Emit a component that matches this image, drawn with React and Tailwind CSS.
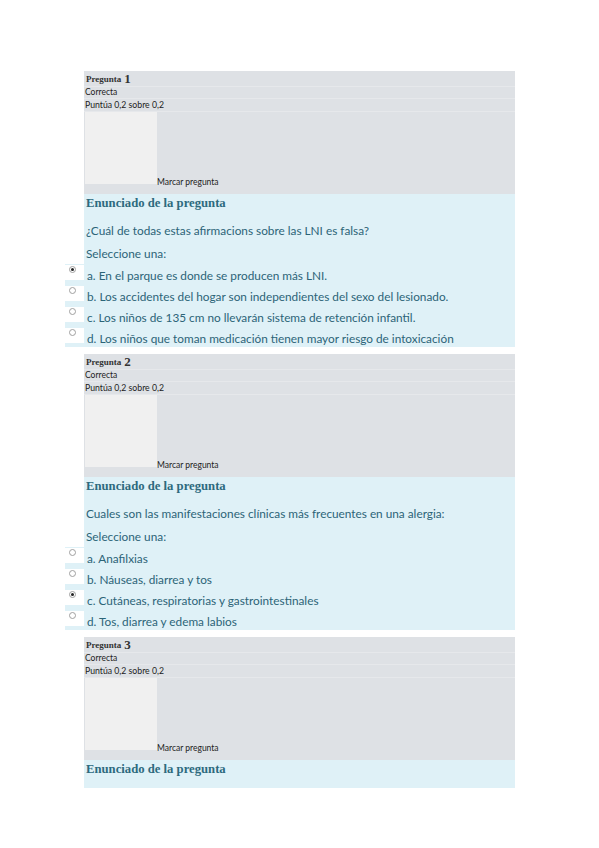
import React from "react";

const serif = { fontFamily: '"Liberation Serif", "DejaVu Serif", serif' };
const sans = { fontFamily: 'Lato, "Open Sans", "Liberation Sans", sans-serif' };

function Radio({ checked }) {
  return (
    <div className="w-[19px] h-[15px] mt-[1px] bg-white shrink-0 relative">
      <div className="absolute left-[4px] top-[1px] w-[7px] h-[7px] rounded-full border border-[#a0a0a0] bg-white flex items-center justify-center">
        {checked && <div className="w-[3px] h-[3px] rounded-full bg-[#222]" />}
      </div>
    </div>
  );
}

function Header({ n }) {
  return (
    <div className="bg-[#dee1e5] pb-[10px]">
      <div className="h-[16px] flex items-end pl-[2px] border-b border-[#e6e8eb] text-[#333]" style={serif}>
        <span className="text-[9px] font-bold leading-[14px]">Pregunta</span>
        <span className="text-[13px] font-bold leading-[15px] ml-[3px]">{n}</span>
      </div>
      <div className="h-[12px] flex items-center pl-[1px] border-b border-[#e6e8eb] text-[8.5px] text-[#222]" style={sans}>
        Correcta
      </div>
      <div className="h-[13px] flex items-center pl-[1px] border-b border-[#e6e8eb] text-[8.7px] text-[#222]" style={sans}>
        Puntúa 0,2 sobre 0,2
      </div>
      <div className="flex items-end pl-[1px]">
        <div className="w-[72px] h-[72px] bg-[#f0f0f0]" />
        <span className="text-[8.5px] text-[#222] leading-none mb-[-2px]" style={sans}>
          Marcar pregunta
        </span>
      </div>
    </div>
  );
}

function Question({ n, text, options, checked, short }) {
  return (
    <div className="mb-[7px]">
      <Header n={n} />
      <div className={`bg-[#dff1f7] ${short ? "h-[28px]" : ""}`}>
        <div className="h-[18px] leading-[18px] pl-[2px] text-[12.7px] font-bold text-[#2d6a7e]" style={serif}>
          Enunciado de la pregunta
        </div>
        {!short && (
          <div className="text-[11.8px] text-[#2c6477]" style={sans}>
            <div className="mt-[10px] h-[18px] leading-[18px] pl-[2px]">{text}</div>
            <div className="mt-[5px] h-[18px] leading-[18px] pl-[2px]">Seleccione una:</div>
            <div className="mt-[1px]">
              {options.map((o, i) => (
                <div key={i} className="-ml-[19px] h-[21px] flex bg-[#dff1f7] last:h-[20px]">
                  <Radio checked={i === checked} />
                  <span className="leading-[21px] pt-[1px] pl-[3px]">{o}</span>
                </div>
              ))}
            </div>
          </div>
        )}
      </div>
    </div>
  );
}

export default function App() {
  return (
    <div className="w-[599px] h-[848px] bg-white overflow-hidden">
      <div className="ml-[84px] w-[431px] pt-[71px]">
        <Question
          n="1"
          text="¿Cuál de todas estas afirmacions sobre las LNI es falsa?"
          options={[
            "a. En el parque es donde se producen más LNI.",
            "b. Los accidentes del hogar son independientes del sexo del lesionado.",
            "c. Los niños de 135  cm no llevarán sistema de retención infantil.",
            "d. Los niños que toman medicación tienen mayor riesgo de intoxicación",
          ]}
          checked={0}
        />
        <Question
          n="2"
          text="Cuales son las manifestaciones clínicas más frecuentes en una alergia:"
          options={[
            "a. Anafilxias",
            "b. Náuseas, diarrea y tos",
            "c. Cutáneas, respiratorias y gastrointestinales",
            "d. Tos, diarrea y edema labios",
          ]}
          checked={2}
        />
        <Question n="3" short />
      </div>
    </div>
  );
}
